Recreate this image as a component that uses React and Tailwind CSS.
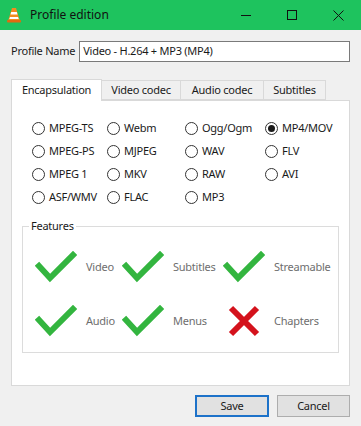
const FONT = { fontFamily: '"Segoe UI", "Noto Sans", sans-serif' }

const FORMATS = [
  ['MPEG-TS', 'Webm', 'Ogg/Ogm', 'MP4/MOV'],
  ['MPEG-PS', 'MJPEG', 'WAV', 'FLV'],
  ['MPEG 1', 'MKV', 'RAW', 'AVI'],
  ['ASF/WMV', 'FLAC', 'MP3', null],
]

const COL_W = ['w-[75px]', 'w-[78px]', 'w-[80px]', 'w-[70px]']

function Radio({ label, checked }) {
  return (
    <div className="flex items-center gap-[4px]">
      <span className="w-[13px] h-[13px] rounded-full border border-[#333] bg-white flex items-center justify-center">
        {checked && <span className="w-[7px] h-[7px] rounded-full bg-[#1a1a1a]" />}
      </span>
      <span>{label}</span>
    </div>
  )
}

function Check() {
  return (
    <svg width="42" height="32" viewBox="0 0 42 32">
      <polyline points="4,15 15,27 38,4" fill="none" stroke="#33b53f" strokeWidth="6" strokeLinecap="square" />
    </svg>
  )
}

function Cross() {
  return (
    <svg width="42" height="32" viewBox="0 0 42 32">
      <path d="M8 3 L34 29 M34 3 L8 29" stroke="#d4121c" strokeWidth="6" />
    </svg>
  )
}

function Feature({ label, ok }) {
  return (
    <div className="flex items-center">
      {ok ? <Check /> : <Cross />}
      <span className="text-[#6e6e6e] ml-[9px]">{label}</span>
    </div>
  )
}

export default function App() {
  return (
    <div className="w-[361px] h-[426px] bg-[#f0f0f0] flex flex-col text-[11px] tracking-[-0.25px] text-[#1a1a1a] overflow-hidden" style={FONT}>
      <div className="h-[30px] bg-[#1ec35e] flex items-center">
        <svg width="14" height="16" viewBox="0 0 14 16" className="ml-[7px]">
          <path d="M5 1 L9 1 L13 14 L1 14 Z" fill="#f28c1e" />
          <path d="M4.2 5 L9.8 5 L10.5 7.5 L3.5 7.5 Z" fill="#fff" />
          <path d="M3 10 L11 10 L11.7 12 L2.3 12 Z" fill="#fff" />
          <rect x="0" y="13" width="14" height="2.5" rx="1" fill="#e06a10" />
        </svg>
        <span className="ml-[9px] text-[12px] tracking-normal text-[#111]">Profile edition</span>
        <div className="ml-auto flex items-center h-full">
          <div className="w-[46px] h-full flex items-center justify-center">
            <span className="w-[10px] h-[1px] bg-[#111]" />
          </div>
          <div className="w-[46px] h-full flex items-center justify-center">
            <span className="w-[10px] h-[10px] border border-[#111]" />
          </div>
          <div className="w-[46px] h-full flex items-center justify-center">
            <svg width="11" height="11" viewBox="0 0 11 11">
              <path d="M0.5 0.5 L10.5 10.5 M10.5 0.5 L0.5 10.5" stroke="#111" strokeWidth="1" />
            </svg>
          </div>
        </div>
      </div>

      <div className="flex items-center mt-[11px] px-[11px]">
        <span className="mr-[4px]">Profile Name</span>
        <div className="flex-1 h-[21px] bg-white border border-[#7a7a7a] flex items-center px-[3px]">
          Video - H.264 + MP3 (MP4)
        </div>
      </div>

      <div className="flex mt-[16px] ml-[11px] h-[22px] items-end">
        <div className="w-[91px] h-[22px] bg-white border border-b-0 border-[#d9d9d9] flex items-center justify-center -mb-[1px] relative z-10">
          Encapsulation
        </div>
        <div className="w-[79px] h-[20px] border border-[#d9d9d9] border-l-0 flex items-center justify-center">Video codec</div>
        <div className="w-[83px] h-[20px] border border-[#d9d9d9] border-l-0 flex items-center justify-center">Audio codec</div>
        <div className="w-[62px] h-[20px] border border-[#d9d9d9] border-l-0 flex items-center justify-center">Subtitles</div>
      </div>

      <div className="mx-[11px] w-[339px] h-[286px] bg-white border border-[#d9d9d9] flex flex-col">
        <div className="flex flex-col gap-[10px] mt-[21px] ml-[20px]">
          {FORMATS.map((row, i) => (
            <div key={i} className="flex h-[13px] items-center">
              {row.map((f, j) => (
                <div key={j} className={COL_W[j]}>
                  {f && <Radio label={f} checked={f === 'MP4/MOV'} />}
                </div>
              ))}
            </div>
          ))}
        </div>

        <div className="mt-[22px] ml-[10px] w-[317px] h-[127px] border border-[#dcdcdc] relative">
          <span className="absolute -top-[8px] left-[6px] bg-white px-[2px] leading-[14px]">Features</span>
          <div className="flex flex-col gap-[22px] mt-[24px] ml-[12px]">
            <div className="flex">
              <div className="w-[87px]"><Feature label="Video" ok /></div>
              <div className="w-[101px]"><Feature label="Subtitles" ok /></div>
              <Feature label="Streamable" ok />
            </div>
            <div className="flex">
              <div className="w-[87px]"><Feature label="Audio" ok /></div>
              <div className="w-[101px]"><Feature label="Menus" ok /></div>
              <Feature label="Chapters" ok={false} />
            </div>
          </div>
        </div>
      </div>

      <div className="flex justify-end gap-[8px] mt-[9px] mr-[11px]">
        <button className="w-[74px] h-[22px] bg-[#e1e1e1] border-2 border-[#1d72c9] flex items-center justify-center">Save</button>
        <button className="w-[73px] h-[22px] bg-[#e1e1e1] border border-[#adadad] flex items-center justify-center">Cancel</button>
      </div>
    </div>
  )
}
